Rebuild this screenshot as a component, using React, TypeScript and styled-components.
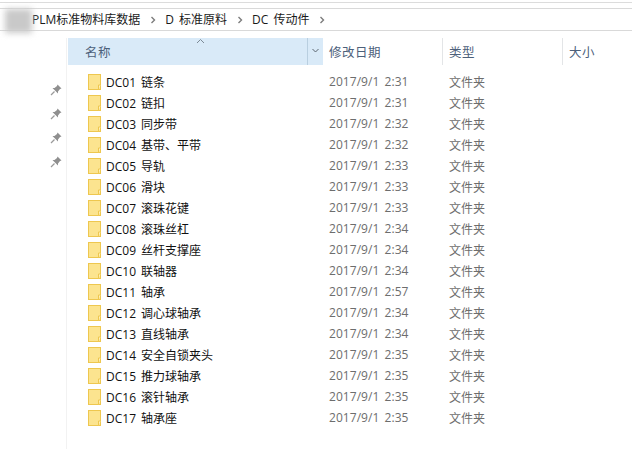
import React from "react";
import styled, { createGlobalStyle } from "styled-components";

const Global = createGlobalStyle`
  html, body { margin: 0; padding: 0; background: #fff; width: 634px; height: 449px; overflow: hidden; }
  body { font-family: "Open Sans", "Noto Sans CJK SC", sans-serif; font-size: 12px; }
`;
const Page = styled.div`
  width: 634px; height: 449px; display: flex; flex-direction: column; background: #fff; overflow: hidden;
`;
const TopRule = styled.div`
  height: 1px; margin: 2px 2px 0 0; background: #dcdcdc;
`;
const AddressBar = styled.div`
  position: relative; height: 21px; margin: 5px 2px 0 0; border-top: 1px solid #d9d9d9; border-bottom: 1px solid #d9d9d9;
  display: flex; align-items: center; padding-left: 32px; color: #1a1a1a; font-size: 12px; line-height: 21px; word-spacing: 2px;
`;
const Blur = styled.div`
  position: absolute; left: 5px; top: 0; width: 27px; height: 24px; background: #c9c9c9; filter: blur(3px);
`;
const Crumb = styled.span`
  white-space: pre;
`;
const Sep = styled.svg`
  width: 6px; height: 8px; margin: 0 9.5px; flex: none;
`;
const Body = styled.div`
  flex: 1; display: flex; margin-top: 7px; min-height: 0;
`;
const PinRail = styled.div`
  width: 67px; flex: none; border-right: 1px solid #f2f2f2; box-sizing: border-box; display: flex; flex-direction: column;
  align-items: flex-end; gap: 10px; padding: 45px 3px 0 0; margin-right: 1px;
`;
const Pin = styled.svg`
  width: 14px; height: 14px; flex: none;
`;
const Main = styled.div`
  flex: 1; min-width: 0; display: flex; flex-direction: column;
`;
const HeaderRow = styled.div`
  display: grid; grid-template-columns: 255px 120px 120px 1fr; height: 27px; color: #4c607a;
`;
const NameHead = styled.div`
  position: relative; background: #d9eaf8; padding-left: 17px; display: flex; align-items: center; font-size: 12.5px; letter-spacing: 0.5px;
`;
const SortCaret = styled.svg`
  position: absolute; left: 128px; top: 0; width: 9px; height: 6px;
`;
const DropArea = styled.div`
  position: absolute; right: 0; top: 0; bottom: 0; width: 15px; border-left: 1px solid #b9cfe0; display: flex; align-items: center; justify-content: center;
`;
const Chevron = styled.svg`
  width: 7px; height: 5px; margin-top: -3px;
`;
const ColHead = styled.div<{ $line?: boolean }>`
  padding-left: 6px; display: flex; align-items: center; border-right: 1px solid ${(p) => (p.$line ? "#e3e5e7" : "transparent")};
  font-size: 12.5px; letter-spacing: 0.5px;
`;
const List = styled.div`
  display: flex; flex-direction: column; padding-top: 6px;
`;
const Row = styled.div`
  display: grid; grid-template-columns: 255px 120px 120px 1fr; height: 21px; align-items: center;
`;
const NameCell = styled.div`
  display: flex; align-items: center; padding-left: 20px; color: #111; white-space: pre; font-size: 12px; word-spacing: 2px;
`;
const Folder = styled.svg`
  width: 13px; height: 16px; margin-right: 5px; flex: none;
`;
const DateCell = styled.div`
  padding-left: 6px; color: #6d6d6d; font-size: 12px; word-spacing: 2px; letter-spacing: 0.05px;
`;
const TypeCell = styled.div`
  padding-left: 6px; color: #6d6d6d; font-size: 12px;
`;

const rows: [string, string][] = [
  ["DC01 链条", "2:31"], ["DC02 链扣", "2:31"], ["DC03 同步带", "2:32"], ["DC04 基带、平带", "2:32"],
  ["DC05 导轨", "2:33"], ["DC06 滑块", "2:33"], ["DC07 滚珠花键", "2:33"], ["DC08 滚珠丝杠", "2:34"],
  ["DC09 丝杆支撑座", "2:34"], ["DC10 联轴器", "2:34"], ["DC11 轴承", "2:57"], ["DC12 调心球轴承", "2:34"],
  ["DC13 直线轴承", "2:34"], ["DC14 安全自锁夹头", "2:35"], ["DC15 推力球轴承", "2:35"], ["DC16 滚针轴承", "2:35"],
  ["DC17 轴承座", "2:35"],
];

const SepIcon = () => (
  <Sep viewBox="0 0 6 8"><path d="M1.5 1 L4.5 4 L1.5 7" fill="none" stroke="#7c7c7c" strokeWidth="1.4" /></Sep>
);
const PinIcon = () => (
  <Pin viewBox="0 0 14 14">
    <path d="M8.5 1.5 L12.5 5.5 L11 6 L9 8.5 L9 10.5 L3.5 5 L5.5 5 L8 3 Z" fill="#8f8f8f" />
    <path d="M5.5 8.5 L2 12" stroke="#9a9a9a" strokeWidth="1.2" />
  </Pin>
);
const FolderIcon = () => (
  <Folder viewBox="0 0 13 16">
    <rect x="0.5" y="0.5" width="12" height="15" fill="#fce48f" stroke="#eec74f" />
    <path d="M10.5 15.5 L10.5 11 L12.5 11" fill="#fff3c4" stroke="#eec74f" />
  </Folder>
);

export default function App() {
  return (
    <Page>
      <Global />
      <TopRule />
      <AddressBar>
        <Blur />
        <Crumb>PLM标准物料库数据</Crumb><SepIcon />
        <Crumb>D 标准原料</Crumb><SepIcon />
        <Crumb>DC 传动件</Crumb><SepIcon />
      </AddressBar>
      <Body>
        <PinRail>
          <PinIcon /><PinIcon /><PinIcon /><PinIcon />
        </PinRail>
        <Main>
          <HeaderRow>
            <NameHead>
              名称
              <SortCaret viewBox="0 0 9 6"><path d="M1 5 L4.5 1.5 L8 5" fill="none" stroke="#7d8a96" strokeWidth="1" /></SortCaret>
              <DropArea>
                <Chevron viewBox="0 0 7 5"><path d="M0.5 1 L3.5 4 L6.5 1" fill="none" stroke="#5c6670" strokeWidth="1" /></Chevron>
              </DropArea>
            </NameHead>
            <ColHead $line>修改日期</ColHead>
            <ColHead $line>类型</ColHead>
            <ColHead>大小</ColHead>
          </HeaderRow>
          <List>
            {rows.map(([name, time]) => (
              <Row key={name}>
                <NameCell><FolderIcon />{name}</NameCell>
                <DateCell>2017/9/1 {time}</DateCell>
                <TypeCell>文件夹</TypeCell>
              </Row>
            ))}
          </List>
        </Main>
      </Body>
    </Page>
  );
}
